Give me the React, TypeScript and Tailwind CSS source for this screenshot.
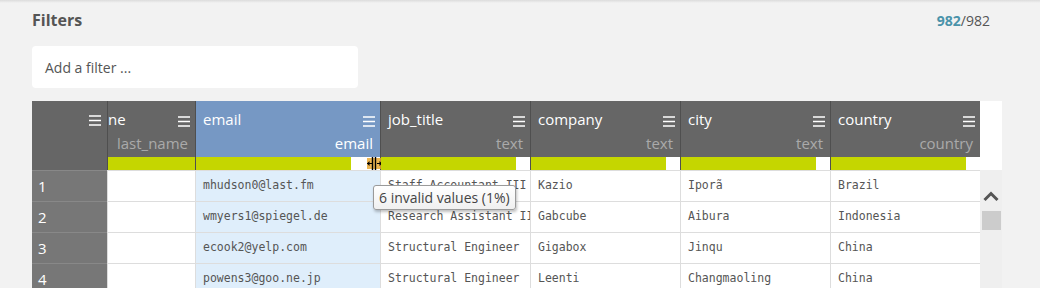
import React from 'react';

type Col = { name: string; type: string; width: string; fill: string; active?: boolean; clip?: boolean };

const columns: Col[] = [
  { name: 'ne', type: 'last_name', width: 'w-[88px]', fill: 'w-full', clip: true },
  { name: 'email', type: 'email', width: 'w-[185px]', fill: 'w-[155px]', active: true },
  { name: 'job_title', type: 'text', width: 'w-[150px]', fill: 'w-[135px]' },
  { name: 'company', type: 'text', width: 'w-[150px]', fill: 'w-[135px]' },
  { name: 'city', type: 'text', width: 'w-[150px]', fill: 'w-[135px]' },
  { name: 'country', type: 'country', width: 'w-[150px]', fill: 'w-[135px]' },
];

const rows = [
  ['', 'mhudson0@last.fm', 'Staff Accountant III', 'Kazio', 'Iporã', 'Brazil'],
  ['', 'wmyers1@spiegel.de', 'Research Assistant II', 'Gabcube', 'Aibura', 'Indonesia'],
  ['', 'ecook2@yelp.com', 'Structural Engineer', 'Gigabox', 'Jinqu', 'China'],
  ['', 'powens3@goo.ne.jp', 'Structural Engineer', 'Leenti', 'Changmaoling', 'China'],
];

const MenuIcon = () => (
  <svg width="12" height="11" viewBox="0 0 12 11" className="shrink-0">
    <path d="M0 1h12M0 5.5h12M0 10h12" stroke="white" strokeWidth="1.5" />
  </svg>
);

const ResizeCursor = () => (
  <svg width="17" height="13" viewBox="0 0 17 13" className="absolute left-[-12px] top-0">
    <rect x="1" y="1" width="15" height="11" fill="#e8a325" opacity="0.8" />
    <path d="M6.5 0v13M9.5 0v13" stroke="black" strokeWidth="1.4" />
    <path d="M1 6.5h5M11 6.5h5" stroke="black" strokeWidth="1.2" />
    <path d="M1 6.5l2.5-2.5v5zM16 6.5l-2.5-2.5v5z" fill="black" />
  </svg>
);

export default function App() {
  const sans = "font-['Open_Sans','Noto_Sans',sans-serif]";
  return (
    <div className={`h-[288px] w-[1040px] overflow-hidden bg-[#f2f2f2] ${sans}`}>
      <div className="h-[3px] bg-gradient-to-b from-[#dcdcdc] to-[#f2f2f2]" />
      <div className="px-8">
        <div className="flex items-center justify-between pt-[6px] pr-[18px]">
          <h2 className="text-[16px] font-bold text-[#555] leading-[22px]">Filters</h2>
          <div className="text-[14px] text-[#555]">
            <span className="font-bold text-[#4a93aa]">982</span>/982
          </div>
        </div>
        <div className="mt-[15px] flex h-[42px] w-[326px] items-center rounded bg-white px-[13px] text-[14px] text-[#555]">
          Add a filter ...
        </div>

        <div className="mt-[13px] flex w-[970px]">
          <div className="w-[948px]">
            {/* header */}
            <div className="flex h-[69px]">
              <div className="flex w-[75px] justify-end bg-[#666] pr-[6px] pt-[14px]">
                <MenuIcon />
              </div>
              {columns.map((c) => (
                <div
                  key={c.name}
                  className={`${c.width} flex flex-col border-l border-[#4f4f4f] ${c.active ? 'bg-[#7698c4]' : 'bg-[#666]'}`}
                >
                  <div className={`flex h-[28px] items-end justify-between pr-[5px] ${c.clip ? 'pl-0' : 'pl-[7px]'}`}>
                    <span className="text-[15px] leading-[20px] text-white">{c.name}</span>
                    <div className="pb-[2px]">
                      <MenuIcon />
                    </div>
                  </div>
                  <div
                    className={`h-[28px] pr-[7px] pt-[4px] text-right text-[15px] leading-[20px] ${c.active ? 'text-white' : 'text-[#aaa]'}`}
                  >
                    {c.type}
                  </div>
                  <div className="relative flex h-[13px] bg-white">
                    <div className={`${c.fill} h-full bg-[#c5d600]`} />
                    {c.active && (
                      <div className="relative ml-[27px]">
                        <ResizeCursor />
                      </div>
                    )}
                  </div>
                </div>
              ))}
            </div>
            {/* body */}
            {rows.map((r, i) => (
              <div key={i} className="flex h-[31px]">
                <div className="flex w-[75px] items-center border-t border-[#888] bg-[#777] pl-[6px] text-[15px] text-white">
                  {i + 1}
                </div>
                {columns.map((c, j) => (
                  <div
                    key={c.name}
                    className={`${c.width} flex items-center overflow-hidden whitespace-nowrap border-l border-t border-[#ddd] pl-[7px] font-['DejaVu_Sans_Mono',monospace] text-[11.5px] text-[#555] ${c.active ? 'bg-[#dfeefb]' : 'bg-white'}`}
                  >
                    {r[j]}
                  </div>
                ))}
              </div>
            ))}
          </div>
          <div className="flex w-[22px] flex-col">
            <div className="h-[69px] bg-white" />
            <div className="flex flex-1 flex-col items-center bg-[#efefef]">
              <svg width="16" height="12" viewBox="0 0 16 12" className="mt-[20px]">
                <path d="M1.5 10L8 3.5l6.5 6.5" stroke="#555" strokeWidth="3" fill="none" />
              </svg>
              <div className="mt-[9px] h-[19px] w-[19px] bg-[#ccc]" />
            </div>
          </div>
        </div>
      </div>

      {/* tooltip */}
      <div className="absolute left-[373px] top-[185px] rounded-[3px] border border-[#9a9a9a] bg-gradient-to-b from-white to-[#f0f0f0] px-[5px] py-[1px] text-[14px] text-[#444] shadow-[1px_2px_3px_rgba(0,0,0,0.25)]">
        6 invalid values (1%)
      </div>
    </div>
  );
}
